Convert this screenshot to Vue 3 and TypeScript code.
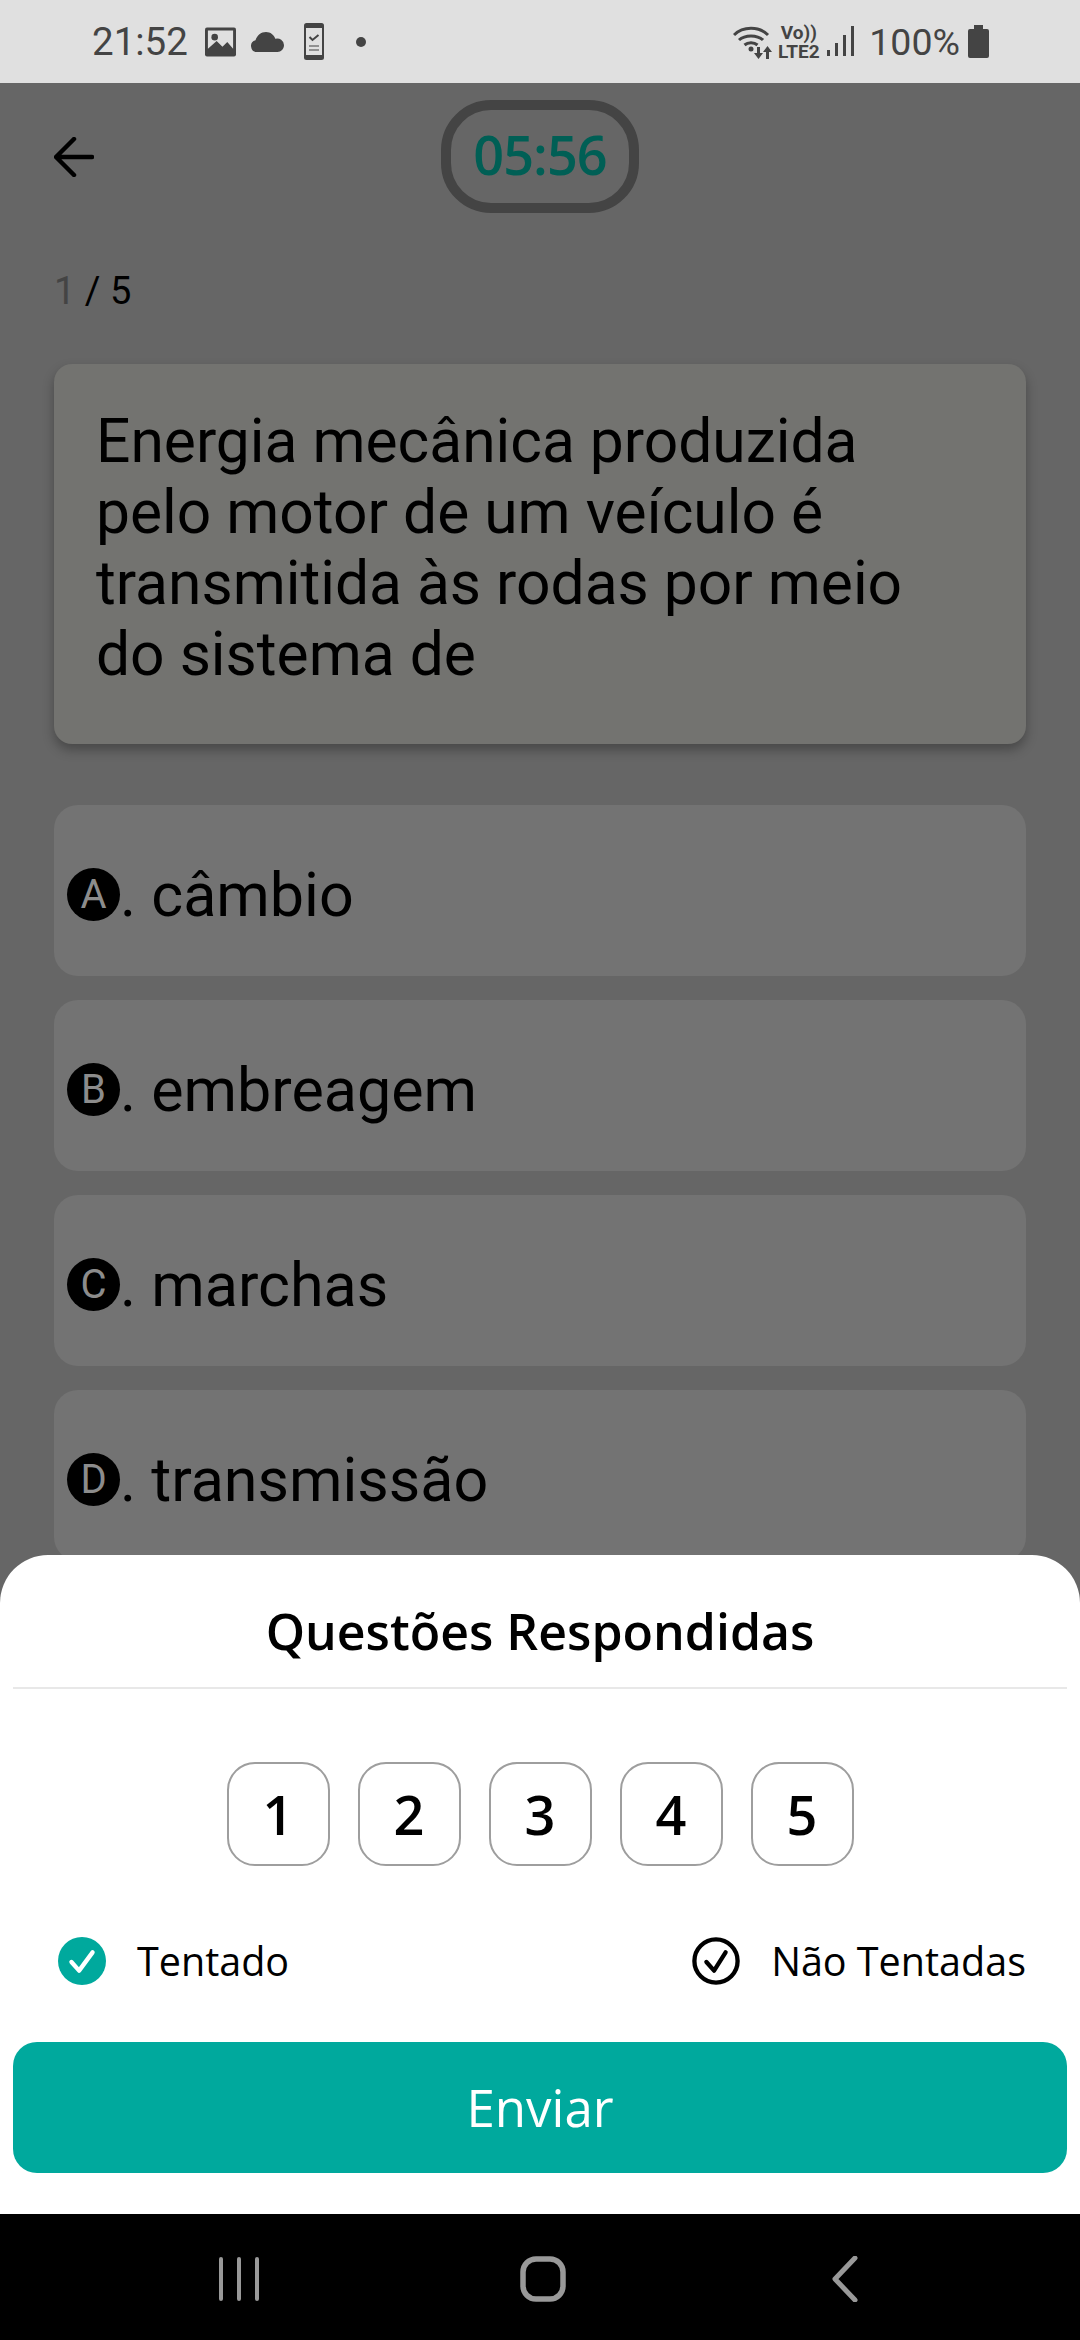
<template>
  <div class="screen">
    <div class="status-bar">
      <div class="status-left">
        <span class="clock">21:52</span>
        <svg class="ic-photo" width="31" height="30" viewBox="0 0 32 30">
          <path fill="#444" d="M2 0h28a2 2 0 0 1 2 2v26a2 2 0 0 1-2 2H2a2 2 0 0 1-2-2V2a2 2 0 0 1 2-2z" />
          <path fill="#e0e0e0" d="M3 3h26v19l-6-7-5 5-6-6-9 8z" />
          <circle cx="10" cy="10" r="3.400" fill="#444" />
        </svg>
        <svg class="ic-cloud" width="34" height="20" viewBox="0 0 34 20">
          <path fill="#444" d="M7 20a6 6 0 0 1-1.500-11.800C7 3.500 11 0 16 0c4.500 0 8 2.800 9.300 6.800A6.700 6.700 0 0 1 34 13c0 4-3 7-6.500 7z" />
        </svg>
        <svg class="ic-phone" width="20" height="37" viewBox="0 0 20 37">
          <rect width="20" height="37" rx="2.500" fill="#444" />
          <rect x="2" y="5" width="16" height="27" fill="#e0e0e0" />
          <path d="M5.500 14l3 3 6-5" fill="none" stroke="#444" stroke-width="2" />
          <path d="M5 23h10M5 27h10" stroke="#777" stroke-width="1.500" />
        </svg>
        <span class="dot"></span>
      </div>
      <div class="status-right">
        <svg class="ic-wifi" width="42" height="34" viewBox="0 0 42 34">
          <g fill="none" stroke="#444" stroke-width="3">
            <path d="M1 10C10 1 26 1 35 10" />
            <path d="M6 15c6-5.500 18-5.500 24 0" />
            <path d="M11.500 20c3.500-3 9.500-3 13 0" />
          </g>
          <circle cx="18" cy="24" r="2.500" fill="#444" />
          <path fill="#444" d="M24 22h3v6h3l-4.500 6-4.500-6h3zM36 34h-3v-7h-3l4.500-6 4.500 6h-3z" />
        </svg>
        <div class="volte">
          <span class="vo">Vo))</span>
          <span class="lte">LTE2</span>
        </div>
        <svg class="ic-signal" width="27" height="31" viewBox="0 0 27 31">
          <rect x="0" y="24" width="3" height="6" fill="#444" />
          <rect x="8" y="17" width="3" height="13" fill="#444" />
          <rect x="16" y="9" width="3" height="21" fill="#444" />
          <rect x="24" y="0" width="3" height="30" fill="#444" />
        </svg>
        <span class="battery-text">100%</span>
        <svg class="ic-battery" width="21" height="33" viewBox="0 0 21 33">
          <path fill="#444" d="M6 0h9v4h4a2 2 0 0 1 2 2v25a2 2 0 0 1-2 2H2a2 2 0 0 1-2-2V6a2 2 0 0 1 2-2h4z" />
        </svg>
      </div>
    </div>

    <div class="body">
      <div class="page">
        <div class="top-row">
          <svg class="back" width="40" height="40" viewBox="0 0 40 40">
            <path d="M38 20H3M20 2 2 20l18 18" fill="none" stroke="#000" stroke-width="4.500" stroke-linecap="round" stroke-linejoin="round" />
          </svg>
          <div class="timer">05:56</div>
        </div>
        <div class="counter"><span class="current">1</span> / 5</div>
        <div class="question">Energia mecânica produzida pelo motor de um veículo é transmitida às rodas por meio do sistema de</div>
        <div class="options">
          <div v-for="opt in options" :key="opt.letter" class="option">
            <span class="letter">{{ opt.letter }}</span><span>. {{ opt.text }}</span>
          </div>
        </div>
      </div>

      <div class="sheet">
        <div class="sheet-title">Questões Respondidas</div>
        <div class="numbers">
          <div v-for="n in 5" :key="n" class="num">{{ n }}</div>
        </div>
        <div class="legend">
          <div class="legend-item">
            <svg width="48" height="48" viewBox="0 0 50 50">
              <circle cx="25" cy="25" r="25" fill="#00a99d" />
              <path d="M14 26l8 9 14-19" fill="none" stroke="#fff" stroke-width="4.500" stroke-linecap="round" stroke-linejoin="round" />
            </svg>
            <span>Tentado</span>
          </div>
          <div class="legend-item">
            <svg width="48" height="48" viewBox="0 0 50 50">
              <circle cx="25" cy="25" r="22.500" fill="none" stroke="#000" stroke-width="4.500" />
              <path d="M15 26l8 9 12-19" fill="none" stroke="#000" stroke-width="4.500" stroke-linecap="round" stroke-linejoin="round" />
            </svg>
            <span>Não Tentadas</span>
          </div>
        </div>
        <button class="submit">Enviar</button>
      </div>
    </div>

    <div class="nav-bar">
      <svg width="44" height="44" viewBox="0 0 44 44">
        <path d="M3 2v40M21 2v40M39 2v40" stroke="#999" stroke-width="4" stroke-linecap="round" />
      </svg>
      <svg class="nav-home" width="46" height="46" viewBox="0 0 46 46">
        <rect x="3" y="3" width="40" height="40" rx="13" fill="none" stroke="#999" stroke-width="5.500" />
      </svg>
      <svg class="nav-back" width="26" height="46" viewBox="0 0 26 46">
        <path d="M23 2 3 23l20 21" fill="none" stroke="#999" stroke-width="5" stroke-linecap="round" stroke-linejoin="round" />
      </svg>
    </div>
  </div>
</template>

<script setup lang="ts">
interface Option {
  letter: string
  text: string
}

const options: Option[] = [
  { letter: 'A', text: 'câmbio' },
  { letter: 'B', text: 'embreagem' },
  { letter: 'C', text: 'marchas' },
  { letter: 'D', text: 'transmissão' }
]
</script>

<style>
html,
body {
  margin: 0;
  background: #000;
}
</style>

<style scoped>
.screen {
  width: 1080px;
  height: 2340px;
  display: flex;
  flex-direction: column;
  overflow: hidden;
  font-family: Roboto, "Liberation Sans", sans-serif;
}

.status-bar {
  height: 83px;
  flex: none;
  background: #e0e0e0;
  color: #444;
  display: flex;
  justify-content: space-between;
  align-items: center;
  box-sizing: border-box;
  padding: 0 91px 0 92px;
}

.status-left,
.status-right {
  display: flex;
  align-items: center;
}

.clock {
  font-size: 38.500px;
  line-height: 42px;
}

.battery-text {
  font-size: 37.500px;
  line-height: 42px;
  margin-left: 15px;
}

.ic-photo {
  margin-left: 17px;
}

.ic-cloud {
  margin-left: 14px;
}

.ic-phone {
  margin-left: 20px;
}

.dot {
  width: 10px;
  height: 10px;
  border-radius: 50%;
  background: #444;
  margin-left: 32px;
}

.volte {
  display: flex;
  flex-direction: column;
  align-items: center;
  font-weight: 700;
  font-size: 19px;
  line-height: 19px;
  margin-left: 3px;
  width: 41px;
}

.ic-signal {
  margin-left: 8px;
}

.ic-battery {
  margin-left: 8px;
}

.body {
  flex: 1;
  position: relative;
  background: #666;
  overflow: hidden;
}

.page {
  padding: 0 54px;
}

.top-row {
  height: 113px;
  margin-top: 17px;
  display: flex;
  align-items: center;
  justify-content: center;
  position: relative;
}

.back {
  position: absolute;
  left: 0;
  top: 37px;
}

.timer {
  width: 198px;
  height: 113px;
  box-sizing: border-box;
  border: 10px solid #444;
  border-radius: 50px;
  padding-bottom: 5px;
  display: flex;
  align-items: center;
  justify-content: center;
  color: #005f55;
  font-family: "Open Sans", sans-serif;
  font-weight: 600;
  font-size: 54px;
  letter-spacing: -1px;
}

.counter {
  margin-top: 56px;
  font-size: 38px;
  line-height: 44px;
  color: #000;
}

.current {
  color: #444;
}

.question {
  margin-top: 51px;
  height: 380px;
  box-sizing: border-box;
  padding: 42px 60px 0 42px;
  background: #737370;
  border-radius: 18px;
  box-shadow: 0 6px 12px rgba(0, 0, 0, 0.3);
  color: #000;
  font-size: 60.500px;
  line-height: 71px;
}

.options {
  margin-top: 61px;
  display: flex;
  flex-direction: column;
  gap: 24px;
}

.option {
  height: 171px;
  flex: none;
  box-sizing: border-box;
  padding: 8px 0 0 13px;
  background: #737373;
  border-radius: 24px;
  display: flex;
  align-items: center;
  color: #000;
  font-size: 61px;
}

.letter {
  width: 53px;
  height: 53px;
  flex: none;
  border-radius: 50%;
  background: #000;
  color: #8c8c8c;
  display: flex;
  align-items: center;
  justify-content: center;
  font-size: 40px;
}

.sheet {
  position: absolute;
  left: 0;
  right: 0;
  bottom: 0;
  height: 659px;
  box-sizing: border-box;
  padding: 0 13px;
  background: #fff;
  border-radius: 48px 48px 0 0;
}

.sheet-title {
  height: 134px;
  box-sizing: border-box;
  padding-top: 20px;
  border-bottom: 2px solid #e8e8e8;
  display: flex;
  align-items: center;
  justify-content: center;
  color: #000;
  font-family: "Open Sans", sans-serif;
  font-weight: 600;
  font-size: 50px;
}

.numbers {
  margin-top: 73px;
  display: flex;
  justify-content: center;
  gap: 28px;
}

.num {
  width: 103px;
  height: 104px;
  box-sizing: border-box;
  border: 2.500px solid #9e9e9e;
  border-radius: 28px;
  display: flex;
  align-items: center;
  justify-content: center;
  color: #000;
  font-family: "Open Sans", sans-serif;
  font-weight: 600;
  font-size: 54px;
}

.legend {
  margin-top: 71px;
  padding: 0 41px 0 45px;
  display: flex;
  justify-content: space-between;
}

.legend-item {
  height: 48px;
  display: flex;
  align-items: center;
  gap: 31px;
  color: #000;
  font-family: "Open Sans", sans-serif;
  font-size: 39.500px;
}

.submit {
  display: block;
  width: 100%;
  height: 131px;
  margin-top: 57px;
  padding-bottom: 2px;
  border: none;
  border-radius: 24px;
  background: #00a99d;
  color: #fff;
  font-family: "Open Sans", sans-serif;
  font-size: 51px;
}

.nav-bar {
  height: 126px;
  flex: none;
  background: #000;
  display: flex;
  align-items: center;
  box-sizing: border-box;
  padding: 4px 0 0 218px;
}

.nav-home {
  margin-left: 258px;
}

.nav-back {
  margin-left: 266px;
}
</style>
